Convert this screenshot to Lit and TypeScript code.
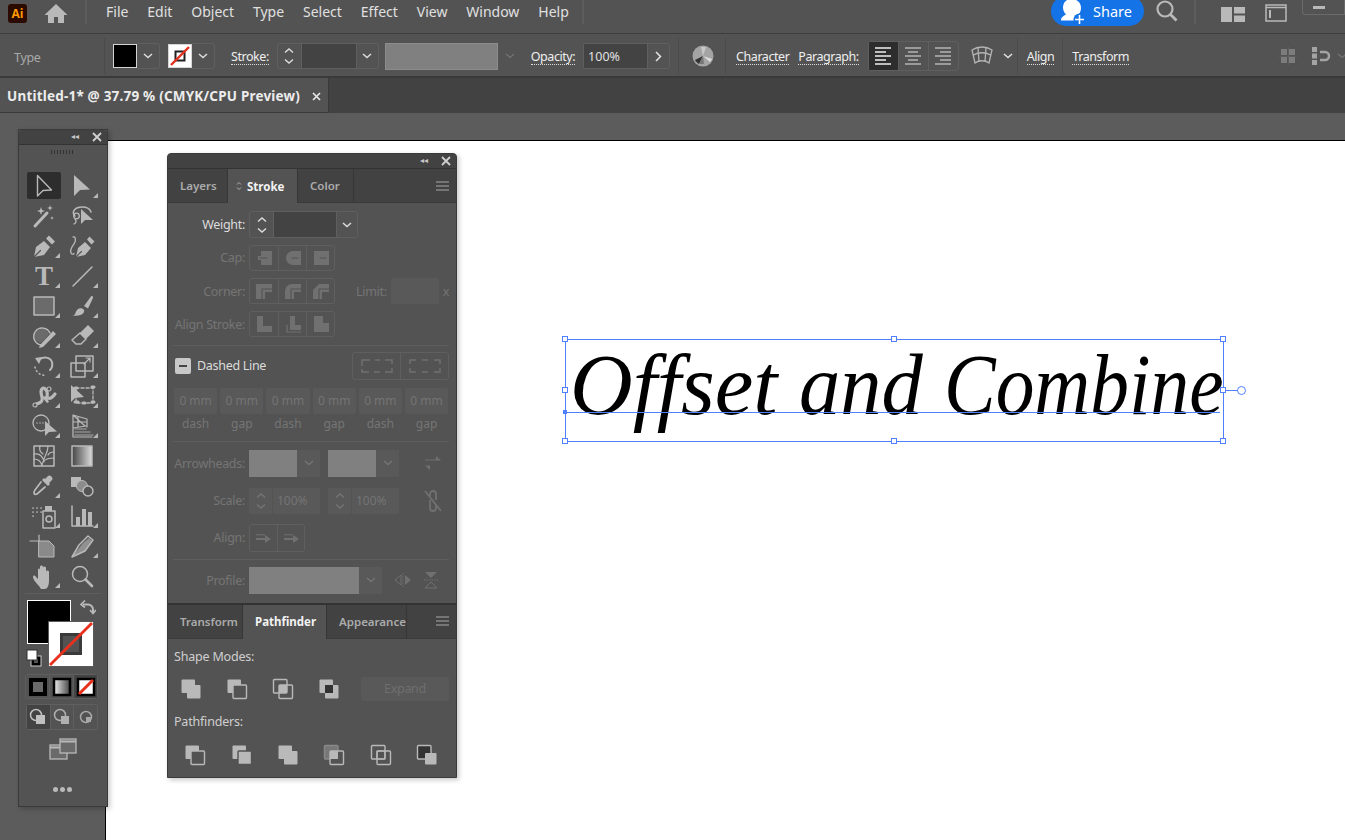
import { LitElement, html, css, svg } from 'lit';
import { customElement } from 'lit/decorators.js';

const G = '#b9b9b9';
const D = '#707070';
const BG = '#535353';

const ic = (body: unknown, size = 24, box = 24) =>
  html`<svg width=${size} height=${size} viewBox="0 0 ${box} ${box}" fill="none" stroke-linejoin="round" stroke-linecap="round">${body}</svg>`;

const chevron = (color = '#dcdcdc') =>
  html`<svg width="10" height="6" viewBox="0 0 10 6"><path d="M1 1l4 3.6L9 1" fill="none" stroke=${color} stroke-width="1.5"/></svg>`;

const spinner = (color = '#dcdcdc') =>
  html`<svg width="12" height="20" viewBox="0 0 12 20" fill="none" stroke=${color} stroke-width="1.4"><path d="M2 6.5l4-3.6 4 3.6M2 13.5l4 3.6 4-3.6"/></svg>`;

const tools: [unknown, boolean][] = [
  [svg`<path d="M5.5 1.5V22l5.5-5.5 8.5-.5z" stroke=${G} stroke-width="1.4"/>`, false],
  [svg`<path d="M4 1V22l6-6 10-.5z" fill=${G}/>`, true],
  [svg`<path d="M3 22L15 9" stroke=${G} stroke-width="3"/><path d="M9 3l1 3 3 1-3 1-1 3-1-3-3-1 3-1zM18 1l.7 2.3L21 4l-2.3.7L18 7l-.7-2.3L15 4l2.3-.7zM20 12l.5 1.500 1.500.5-1.500.5-.5 1.500-.5-1.500-1.500-.5 1.500-.5z" fill=${G}/>`, false],
  [svg`<path d="M5 12C1 8 5 3 12 3c5 0 8 2 9 5" stroke=${G} stroke-width="1.5"/><circle cx="6.500" cy="12" r="2.800" stroke=${G} stroke-width="1.300"/><path d="M5 15c2 2 1 4-1 5" stroke=${G} stroke-width="1.300"/><path d="M11 5v15l4-4 8 0z" fill=${G}/>`, false],
  [svg`<path d="M2 23l2-10 8-6 6 6-6 8zM14 4.500l3-3 6 6-3 3z" fill=${G}/><path d="M2.500 22.500l6-6" stroke=${BG} stroke-width="1.200"/>`, true],
  [svg`<path d="M6 23l2-9 7-6 6 6-6 7zM17 5.500l2.500-3 5 5-3 3z" fill=${G}/><path d="M6.500 22.500l5-5" stroke=${BG} stroke-width="1.100"/><path d="M3 3c2-1 3 2 2 5S-1 15 1 19c.6 1.500 2 1.500 3 .5" stroke=${G} stroke-width="1.300"/>`, false],
  [svg`<text x="12" y="21" text-anchor="middle" font-family="Liberation Serif" font-weight="700" font-size="27" fill=${G}>T</text>`, true],
  [svg`<path d="M3 22L22 3" stroke=${G} stroke-width="1.500"/>`, true],
  [svg`<rect x="2" y="3" width="20" height="18" fill="#6b6b6b" stroke=${G} stroke-width="1.500"/>`, true],
  [svg`<path d="M14 12L21 2.500c1-1 2.500 0 2 1.500l-5 10.500z" fill=${G}/><path d="M2 22c4 0 3-5 6-7 2-1.500 5-1 6 1 1 3-2 6-12 6z" fill=${G}/>`, true],
  [svg`<path d="M9 21a8.500 8.500 0 1 1 9-12" stroke=${G} stroke-width="1.500"/><path d="M3 12a6.500 6.500 0 0 0 6 7l8-9-3-4a7 7 0 0 0-11 6z" fill="#6b6b6b"/><path d="M8 21L21 7l3 3-13 13-4 1z" fill=${G}/>`, true],
  [svg`<path d="M10 9L18 1l6 6-8 8z" fill=${G}/><path d="M10 9l6 6-5 5H6l-4-4z" stroke=${G} stroke-width="1.500"/>`, true],
  [svg`<path d="M7 6c4-4 11-3 13 2 1 4 0 6-2 8" stroke=${G} stroke-width="2"/><path d="M3 4l7-1-3 7z" fill=${G}/><path d="M3 13c1 5 5 9 11 8" stroke=${G} stroke-width="1.500" stroke-dasharray="1 3"/>`, true],
  [svg`<rect x="1" y="9" width="14" height="14" stroke=${G} stroke-width="1.500"/><rect x="6" y="2" width="17" height="15" stroke=${G} stroke-width="1.500"/><path d="M14 10l6-6m-4 0h4v4" stroke=${G} stroke-width="1.200"/>`, true],
  [svg`<path d="M4 20c5-1 7-3 6-7S8 7 10 5c2-2 4 0 5 3s-1 5 1 6c2 1 4 0 7-4" stroke=${G} stroke-width="3.200"/><path d="M10 13l5 6 2-1-3-6" fill=${G}/><circle cx="3" cy="21" r="2" fill=${BG} stroke=${G} stroke-width="1.200"/><circle cx="17" cy="5" r="2" fill=${BG} stroke=${G} stroke-width="1.200"/>`, true],
  [svg`<rect x="6" y="4" width="17" height="15" stroke=${G} stroke-width="1.300" stroke-dasharray="3 2"/><path d="M1 1v17l4-4 9-1z" fill=${G}/><path d="M5 4h2M5 18h3M22 3h2M22 18h2M13 19h2" stroke=${G} stroke-width="3"/>`, true],
  [svg`<circle cx="9" cy="9" r="8" stroke=${G} stroke-width="1.300"/><path d="M5 9h.1M8 9h.1M11 9h.1" stroke=${G} stroke-width="1.400"/><path d="M13 7v15l4-4 8-.5z" fill=${G}/>`, true],
  [svg`<path d="M3 1v22M3 1l14 4v8M3 23h19M3 1l12 11M3 8h14M3 14l13-2M8 3v10" stroke=${G} stroke-width="1.200"/><path d="M5 15h11M5 18h15M5 21h18" stroke="#8c8c8c" stroke-width="1.500"/>`, true],
  [svg`<rect x="2" y="2" width="20" height="20" stroke=${G} stroke-width="1.500"/><path d="M2 15c4 0 7 2 8 7M10 22c0-6 4-8 12-8M12 18c-1-5-4-9-10-8M12 15c1-4 4-6 4-13M8 2c-1 3 0 6 3 8M22 8c-3 0-5 1-6 3" stroke=${G} stroke-width="1.200"/>`, false],
  [svg`<defs><linearGradient id="grd"><stop offset="0" stop-color="#444"/><stop offset="1" stop-color="#ddd"/></linearGradient></defs><rect x="2" y="2" width="20" height="20" fill="url(#grd)" stroke=${G} stroke-width="1.500"/>`, false],
  [svg`<path d="M16 2c2-2 6 2 4 4l-3 3 1 1-2 2-6-6 2-2 1 1z" fill=${G}/><path d="M9 8L3 16c-2 3-1 5 2 4l8-7" stroke=${G} stroke-width="1.700"/>`, true],
  [svg`<rect x="1" y="3" width="10" height="10" fill=${G}/><circle cx="12" cy="12" r="5.500" fill="#8c8c8c" stroke=${G}/><circle cx="18" cy="17" r="5" fill=${BG} stroke=${G} stroke-width="1.500"/>`, false],
  [svg`<path d="M1 4h.1M5 4h.1M9 4h.1M1 8h.1M5 8h.1M9 8h.1M1 12h.1" stroke=${G} stroke-width="1.700"/><rect x="11" y="7" width="12" height="17" stroke=${G} stroke-width="1.500"/><rect x="13" y="2" width="7" height="5" fill=${G}/><circle cx="17" cy="15" r="3" stroke=${G} stroke-width="1.500"/>`, true],
  [svg`<path d="M2 2v20h21" stroke=${G} stroke-width="1.500"/><rect x="6" y="13" width="4" height="9" fill=${G}/><rect x="12" y="5" width="4" height="17" fill=${G}/><rect x="18" y="8" width="4" height="14" fill=${G}/>`, true],
  [svg`<path d="M-2 7h10M7 1v10" stroke=${G} stroke-width="1.200"/><path d="M7 7h10l5 5v11H7z" fill="#8a8a8a" stroke=${G}/>`, false],
  [svg`<path d="M2 23l7-12 9-9 5 4-8 11z" stroke=${G} stroke-width="1.500"/><path d="M2 23l11-14 6-5 3 3-7 10z" fill=${G} opacity=".6"/>`, true],
  [svg`<path d="M7 22c-3-3-6-7-6-9 0-2 2-2 3 0l2 2V6c0-2 2-2 2 0v5-8c0-2 3-2 3 0v8-7c0-2 3-2 3 0v8-4c0-2 3-2 3 0v9c0 5-2 8-4 8H9z" fill=${G}/>`, true],
  [svg`<circle cx="10" cy="10" r="7.500" stroke=${G} stroke-width="1.500"/><path d="M15.500 15.500L22 22" stroke=${G} stroke-width="2.600"/>`, false],
];

const square = (x: number, y: number, w: number, fill: string, stroke = 'none') =>
  svg`<rect x=${x} y=${y} width=${w} height=${w} rx="1" fill=${fill} stroke=${stroke} stroke-width="1.400"/>`;

const shapeModes = [
  svg`${square(1.5, 1.5, 13.5, G)}${square(7, 7, 13.5, G)}`,
  svg`${square(1.5, 1.5, 13.5, G)}${square(7, 7, 13.5, BG, G)}`,
  svg`${square(1.5, 1.5, 13.5, BG, G)}${square(7, 7, 13.5, 'none', G)}<rect x="7" y="7" width="8" height="8" fill=${G}/>`,
  svg`${square(1.5, 1.5, 13.5, G)}${square(7, 7, 13.5, G)}<rect x="7" y="7" width="8" height="8" fill="#333"/>`,
];

const pathfinders = [
  svg`${square(1.5, 1.5, 13.5, G)}${square(7, 7, 13.5, BG, G)}`,
  svg`${square(1.5, 1.5, 13.5, G)}${square(7, 7, 13.5, G, BG)}`,
  svg`${square(1.5, 1.5, 13.5, G)}${square(7, 7, 13.5, G)}`,
  svg`${square(1.5, 1.5, 13.5, '#777', '#888')}${square(7, 7, 13.5, BG, G)}<rect x="7" y="7" width="8" height="8" fill=${G}/>`,
  svg`${square(1.5, 1.5, 13.5, BG, G)}${square(7, 7, 13.5, 'none', G)}<rect x="7" y="7" width="8" height="8" stroke=${G} stroke-width="1.200"/>`,
  svg`${square(1.5, 1.5, 13.5, '#333', G)}${square(9, 9, 11.5, G)}`,
];

// cap, corner and align stroke buttons, all disabled
const capIcons = [
  svg`<path d="M6 2h11v14H6v-5H3V7h3z" fill=${D}/><path d="M5 9h7" stroke=${BG} stroke-width="1.200"/>`,
  svg`<path d="M9 2h8v14H9a7 7 0 0 1 0-14z" fill=${D}/><path d="M8 9h6" stroke=${BG} stroke-width="1.200"/>`,
  svg`<path d="M2 2h15v14H2z" fill=${D}/><path d="M8 9h6" stroke=${BG} stroke-width="1.200"/>`,
];
const cornerIcons = [
  svg`<path d="M1 2h16v8h-7v7H1z" fill=${D}/><path d="M7 17V7h10" stroke=${BG} stroke-width="1.100"/>`,
  svg`<path d="M1 17V9a7 7 0 0 1 7-7h9v8h-7v7z" fill=${D}/><path d="M7 17V7h10" stroke=${BG} stroke-width="1.100"/>`,
  svg`<path d="M1 17V8l6-6h10v8h-7v7z" fill=${D}/><path d="M7 17V7h10" stroke=${BG} stroke-width="1.100"/>`,
];
const alignIcons = [
  svg`<path d="M2 1h6v10h9v6H2z" fill=${D}/>`,
  svg`<path d="M6 1h5v9h6v5H6z" fill=${D}/><path d="M3 10v7h14" fill="none" stroke=${D} stroke-width="1.200"/>`,
  svg`<path d="M2 1h9v7h6v9H2z" fill=${D}/>`,
];

@customElement('app-root')
export class AppRoot extends LitElement {
  static styles = css`
    :host {
      display: block;
      width: 1345px;
      height: 840px;
      overflow: hidden;
      font-family: 'Noto Sans', 'Open Sans', sans-serif;
      color: #dcdcdc;
      background: #5c5c5c;
    }
    .app { display: flex; flex-direction: column; height: 840px; }
    svg { display: block; flex: none; }

    /* menu bar */
    .menubar {
      height: 34px; flex: none; display: flex; align-items: flex-start;
      background: #535353;
      border-bottom: 1px solid #3d3d3d; box-sizing: border-box;
      position: relative;
    }
    .logo {
      margin: 4px 0 0 8px; width: 19px; height: 19px; border-radius: 3px; background: #2b0a00;
      color: #ff9a00; font: 700 12px/19px 'Open Sans', sans-serif; text-align: center;
    }
    .home { margin: 1px 0 0 17px; }
    .vsep { width: 2px; height: 24px; background: #5d5d5d; flex: none; }
    .menu { display: flex; gap: 18.900px; margin-left: 19px; font-size: 14px; line-height: 24px; color: #e0e0e0; }
    .menubar .spacer { flex: 1; }
    .share {
      margin-top: -4px; width: 93px; height: 30px; border-radius: 15px; background: #1473e6; color: #fff;
      display: flex; align-items: center; gap: 7px; padding-left: 9px; box-sizing: border-box; font-size: 14.500px;
    }
    .winbox {
      width: 43px; height: 15px; margin-left: 15px; border: 1px solid #6a6a6a; border-top: 0;
      border-radius: 0 0 0 3px; display: flex; box-sizing: border-box; padding: 6px 0 0 10px;
    }
    .winbox i { width: 12px; height: 2.500px; background: #b9b9b9; }

    /* control bar */
    .control {
      height: 44px; flex: none; box-sizing: border-box; display: flex; align-items: center; padding-top: 2px;
      background: #535353; border-bottom: 2px solid #3a3a3a; font-size: 12.500px; letter-spacing: -0.3px;
    }
    .mode { width: 104px; padding-left: 14px; margin-top: 2px; color: #a9a9a9; flex: none; box-sizing: border-box; }
    .csep { width: 1px; height: 36px; background: #4b4b4b; flex: none; }
    .swatch { width: 24px; height: 24px; box-sizing: border-box; border: 1px solid #d4d4d4; background: #000; flex: none; }
    .swatch.none { background: #fff; display: flex; align-items: center; justify-content: center; }
    .seg {
      display: flex; align-items: stretch; flex: none; box-sizing: border-box;
      border: 1.500px solid #5f5f5f; border-radius: 3px; height: 26px;
    }
    .seg > * { display: flex; align-items: center; justify-content: center; box-sizing: border-box; }
    .seg > * + * { border-left: 1px solid #5f5f5f; }
    .drop { width: 23px; border-left: 0; border-radius: 0 3px 3px 0; }
    .dark { background: #434343; }
    .gray { background: #808080; }
    .link { color: #eee; border-bottom: 1px dotted #ddd; line-height: 15px; flex: none; white-space: nowrap; letter-spacing: -0.45px; margin-top: 2px; }
    .opacity-val { color: #e0e0e0; font-size: 12.500px; letter-spacing: 0; justify-content: flex-start !important; padding-left: 4px; }
    .active { background: #2d2d2d; }

    /* document tabs */
    .tabs { height: 35px; flex: none; background: #424242; display: flex; }
    .doc {
      width: 329px; box-sizing: border-box; background: #535353; border-right: 1px solid #3a3a3a;
      border-bottom: 1px solid #3a3a3a; display: flex; align-items: center; padding: 2px 0 0 7px;
      font-size: 13.500px; font-weight: 700; letter-spacing: 0.2px; color: #ececec; white-space: nowrap;
    }
    .doc svg { margin-left: 12px; }

    /* canvas */
    .canvas { flex: 1; position: relative; background: #5c5c5c; }
    .artboard {
      position: absolute; left: 105px; top: 27px; right: 0; bottom: 0;
      background: #fff; border-top: 1px solid #000; border-left: 1px solid #000;
    }
    .sel { position: absolute; left: 565px; top: 226px; width: 659px; height: 103px; border: 1px solid #4f80ff; box-sizing: border-box; }
    .art {
      position: absolute; left: 4px; top: -13px; display: flex; white-space: nowrap; color: #000;
      font: italic 400 86px/116px 'Liberation Serif', serif;
    }
    .art span { display: block; transform-origin: left center; }
    .w1 { width: 229px; transform: scaleX(1.01); }
    .w2 { width: 145px; transform: scaleX(0.96); }
    .w3 { width: 277px; transform: scaleX(0.9); }
    .baseline { position: absolute; left: 0; width: 654px; top: 72px; height: 1px; background: #4f80ff; }
    .h { position: absolute; width: 6px; height: 6px; box-sizing: border-box; border: 1px solid #4f80ff; background: #fff; }
    .h.solid { background: #4f80ff; width: 4px; height: 4px; }
    .shaft { position: absolute; left: 657px; top: 50px; width: 15px; height: 1px; background: #4f80ff; }
    .knob { position: absolute; left: 671px; top: 46px; width: 9px; height: 9px; border-radius: 50%; border: 1px solid #4f80ff; background: #fff; box-sizing: border-box; }

    /* floating panels */
    .panel {
      position: absolute; box-sizing: border-box; background: #535353; border: 1px solid #3a3a3a;
      box-shadow: 2px 2px 5px rgba(0,0,0,.22); display: flex; flex-direction: column;
    }
    .phead {
      height: 15px; flex: none; box-sizing: border-box; background: #424242; display: flex; align-items: center; justify-content: flex-end;
      gap: 13px; padding-right: 5px; border-bottom: 1px solid #333; border-radius: 4px 4px 0 0;
    }
    .collapse { color: #c8c8c8; font-size: 8px; line-height: 12px; font-family: 'DejaVu Sans', sans-serif; }

    .toolbox { left: 18px; top: 16px; width: 90px; height: 678px; }
    .grip { height: 4px; width: 24px; margin: 5px 0 0 32px; flex: none;
      background: repeating-linear-gradient(90deg, #333 0 1px, transparent 1px 3px); }
    .tgrid { display: grid; grid-template-columns: 38px 38px; grid-auto-rows: 30px; margin: 17px 0 0 6px; flex: none; }
    .tool { position: relative; display: flex; align-items: center; justify-content: center; }
    .tool.on::before { content: ''; position: absolute; left: 2px; top: 1px; width: 34px; height: 27px; background: #2d2d2d; border-radius: 2px; }
    .tool svg { position: relative; overflow: visible; }
    .tool.fly::after {
      content: ''; position: absolute; right: 3px; bottom: 3px; width: 0; height: 0;
      border-left: 5px solid transparent; border-bottom: 5px solid #b9b9b9;
    }
    .tsep { height: 1px; background: #5e5e5e; margin: 2px 6px 0; flex: none; }
    .colors { position: relative; height: 73px; flex: none; }
    .fillbox { position: absolute; left: 8px; top: 6px; width: 44px; height: 44px; background: #000; border: 1px solid #fff; box-sizing: border-box; }
    .strokebox { position: absolute; left: 29px; top: 27px; width: 46px; height: 46px; background: #fff; border: 1px solid #5a5a5a; box-sizing: border-box; }
    .swap { position: absolute; left: 61px; top: 5px; }
    .defaults { position: absolute; left: 7px; top: 55px; }
    .modes { margin: 7px 0 0 6px; width: 73px; height: 25px; }
    .modes > * { flex: 1; }
    .draw { margin: 5px 0 0 7px; width: 72px; height: 26px; }
    .draw > * { flex: 1; }
    .screen { margin: 8px 0 0 30px; flex: none; }
    .dots { margin: 27px 0 0 34px; display: flex; gap: 2px; flex: none; }
    .dots i { width: 5px; height: 5px; border-radius: 50%; background: #b9b9b9; }

    .stroke-panel { left: 167px; top: 40px; width: 290px; height: 625px; border-radius: 4px 4px 0 0; }
    .ptabs { display: flex; height: 34px; flex: none; background: #424242; font-size: 11.500px; font-weight: 600; color: #ababab; border-bottom: 1px solid #3a3a3a; box-sizing: border-box; }
    .ptab { display: flex; align-items: center; box-sizing: border-box; padding-left: 12px; border-right: 1px solid #363636; }
    .ptab.on { background: #535353; color: #f2f2f2; font-weight: 700; height: 34px; gap: 5px; }
    .pmenu { margin: auto 7px auto auto; }
    .pbody { display: flex; flex-direction: column; padding: 0 7px 0 5px; font-size: 12.500px; letter-spacing: -0.3px; color: #757575; flex: none; }
    .row { display: flex; align-items: center; height: 27px; flex: none; }
    .label { width: 72px; margin-right: 4px; text-align: right; flex: none; white-space: nowrap; }
    .bright { color: #dcdcdc; }
    .rows { display: flex; flex-direction: column; gap: 6.300px; margin-top: 8px; }
    .hr { height: 1px; background: #5e5e5e; flex: none; margin-top: 7px; }
    .iconbtn { width: 28px; }
    .boxed { background: #595959; border-radius: 2px; }
    .check { width: 16px; height: 16px; border-radius: 2px; background: #c8c8c8; margin: 0 6px 0 2px; display: flex; align-items: center; justify-content: center; flex: none; }
    .check i { width: 8px; height: 2px; background: #444; }
    .dashes { display: grid; grid-template-columns: repeat(6, 43.200px); column-gap: 3px; margin: 8px 0 0 1px; flex: none; }
    .dashes div { height: 26px; background: #595959; color: #747474; font-size: 12px; letter-spacing: 0; display: flex; align-items: center; justify-content: center; border-radius: 2px; }
    .dashes span { height: 16px; margin-top: 2px; text-align: center; font-size: 12px; letter-spacing: 0; line-height: 16px; }
    .mini { width: 23px; height: 100%; display: flex; align-items: center; justify-content: center; background: #595959; flex: none; }
    .pct { height: 100%; background: #595959; border-left: 1px solid #535353; display: flex; align-items: center; padding-left: 4px; box-sizing: border-box; font-size: 12px; letter-spacing: 0; color: #747474; }
    .pick { height: 100%; flex: none; }
    .ml8 { margin-left: 8px; }
    .path-head { margin-top: 10px; height: 16px; line-height: 16px; color: #cfcfcf; font-size: 12.500px; letter-spacing: -0.2px; padding-left: 1px; flex: none; }
    .irow { display: flex; height: 24px; margin: 12px 0 0 -5px; align-items: center; flex: none; }
    .irow > div { display: flex; justify-content: center; flex: none; }
    .expand { width: 88px; height: 24px; background: #595959; color: #6f6f6f; font-size: 12.500px; align-items: center; border-radius: 2px; }
  `;

  private header() {
    return html`<div class="phead">
      <span class="collapse">◂◂</span>
      <svg width="10" height="10" viewBox="0 0 10 10"><path d="M1 1l8 8M9 1l-8 8" stroke="#d0d0d0" stroke-width="1.800"/></svg>
    </div>`;
  }

  private hamburger() {
    return html`<svg class="pmenu" width="13" height="10" viewBox="0 0 13 10"><path d="M0 1h13M0 5h13M0 9h13" stroke="#a8a8a8" stroke-width="1.200"/></svg>`;
  }

  private iconSeg(icons: unknown[]) {
    return html`<div class="seg">${icons.map((i) => html`<div class="iconbtn">${ic(i, 18, 18)}</div>`)}</div>`;
  }

  private menubar() {
    return html`<div class="menubar">
      <div class="logo">Ai</div>
      <div class="home">
        <svg width="24" height="24" viewBox="0 0 24 24"><path d="M12 3L0.500 14h3.500v8h6v-6h4v6h6v-8h3.500z" fill="#b9b9b9"/></svg>
      </div>
      <div class="vsep" style="margin-left:17px"></div>
      <div class="menu">
        ${['File', 'Edit', 'Object', 'Type', 'Select', 'Effect', 'View', 'Window', 'Help'].map((m) => html`<span>${m}</span>`)}
      </div>
      <div class="vsep" style="margin-left:13px"></div>
      <div class="spacer"></div>
      <div class="share">
        <svg width="26" height="28" viewBox="0 0 26 28"><path d="M11.500 2C6 2 3 6 3 10.500c0 3 1.500 5.500 3 7C3.500 19 1 20 1 23.500h13.500A7 7 0 0 1 19 17c1.500-2 2-4 2-6.500C21 6 17 2 11.500 2z" fill="#fff"/><circle cx="19.500" cy="22.500" r="6" fill="#1473e6"/><path d="M19.500 18v9M15 22.500h9" stroke="#fff" stroke-width="1.600"/></svg>
        <span>Share</span>
      </div>
      <svg style="margin:-1px 0 0 11px" width="24" height="24" viewBox="0 0 24 24" fill="none" stroke="#b9b9b9"><circle cx="10" cy="10" r="7.500" stroke-width="2.200"/><path d="M15.500 15.500l6 6" stroke-width="2.800"/></svg>
      <div class="vsep" style="margin-left:15px"></div>
      <svg style="margin:6px 0 0 25px" width="24" height="16" viewBox="0 0 24 16" fill="#b9b9b9"><rect x="0" y="1" width="11" height="15"/><rect x="13" y="1" width="11" height="6.500"/><rect x="13" y="9.500" width="11" height="6.500"/></svg>
      <svg style="margin:4px 0 0 20px" width="22" height="18" viewBox="0 0 22 18" fill="none" stroke="#b9b9b9"><rect x="1" y="1" width="20" height="16" stroke-width="1.500"/><path d="M1 3.500h20" stroke-width="1.500"/><path d="M4 6h2v8H4z" fill="#b9b9b9" stroke="none"/></svg>
      <div class="winbox"><i></i></div>
    </div>`;
  }

  private controlbar() {
    return html`<div class="control">
      <div class="mode">Type</div>
      <div class="csep"></div>
      <div class="swatch" style="margin-left:8px"></div>
      <div class="seg drop">${html`<div style="width:22px">${chevron()}</div>`}</div>
      <div class="swatch none" style="margin-left:8px">
        <svg width="22" height="22" viewBox="0 0 22 22"><rect x="6.500" y="6.500" width="9" height="9" fill="none" stroke="#222" stroke-width="2"/><path d="M2 20L20 2" stroke="#e8301c" stroke-width="2.400"/></svg>
      </div>
      <div class="seg drop">${html`<div style="width:22px">${chevron()}</div>`}</div>
      <span class="link" style="margin-left:16px">Stroke:</span>
      <div class="seg" style="margin-left:8px;width:102px">
        <div style="width:23px">${spinner()}</div>
        <div class="dark" style="width:55px"></div>
        <div style="width:21px">${chevron()}</div>
      </div>
      <div class="gray" style="margin-left:6px;width:113px;height:27px;flex:none;border:1px solid #8c8c8c;box-sizing:border-box"></div>
      <div style="width:24px;display:flex;justify-content:center;flex:none">${chevron('#707070')}</div>
      <span class="link" style="margin-left:9px">Opacity:</span>
      <div class="seg" style="margin-left:8px;width:87px">
        <div class="dark opacity-val" style="width:63px">100%</div>
        <div style="width:21px"><svg width="7" height="11" viewBox="0 0 7 11"><path d="M1 1l4.500 4.500L1 10" fill="none" stroke="#e4e4e4" stroke-width="1.500"/></svg></div>
      </div>
      <div class="csep" style="margin-left:8px"></div>
      <svg style="margin-left:13px" width="22" height="22" viewBox="0 0 22 22">
        <circle cx="11" cy="11" r="10.500" fill="#a4a4a4"/>
        <path d="M11 11L3 15a9 9 0 0 0 4 4z" fill="#333"/><path d="M11 11l-4 8h5z" fill="#777"/><path d="M11 11l7 6 2-3z" fill="#ddd"/><path d="M11 11L9 2l5 0z" fill="#c8c8c8"/>
      </svg>
      <div class="csep" style="margin-left:11px"></div>
      <span class="link" style="margin-left:10px">Character</span>
      <span class="link" style="margin-left:9px">Paragraph:</span>
      <div class="seg" style="margin-left:9px;width:91px;height:30px">
        ${['M4 5h16M4 9h11M4 13h16M4 17h11M4 21h16', 'M4 5h16M7 9h10M4 13h16M7 17h10M4 21h16', 'M4 5h16M9 9h11M4 13h16M9 17h11M4 21h16'].map(
          (d, i) => html`<div class=${i === 0 ? 'active' : ''} style="flex:1">
            <svg width="24" height="26" viewBox="0 0 24 26"><path d=${d} stroke=${i === 0 ? '#f0f0f0' : '#b4b4b4'} stroke-width="1.500"/></svg>
          </div>`,
        )}
      </div>
      <svg style="margin-left:12px" width="22" height="22" viewBox="0 0 22 22" fill="none" stroke="#b4b4b4" stroke-width="1.300"><path d="M1 5c6-4 14-4 20 0l-3 13c-4-3-10-3-14 0zM7 3l1 13M15 3l-1 13M2.500 10c5-3 12-3 17 0"/></svg>
      <div style="margin-left:10px;width:12px">${chevron('#e0e0e0')}</div>
      <div class="csep" style="margin-left:4px"></div>
      <span class="link" style="margin-left:9px">Align</span>
      <div class="csep" style="margin-left:8px"></div>
      <span class="link" style="margin-left:9px">Transform</span>
      <svg style="margin-left:150px" width="18" height="18" viewBox="0 0 18 18" fill="#7c7c7c"><rect x="2" y="2" width="6" height="6"/><rect x="10" y="2" width="6" height="6"/><rect x="2" y="10" width="6" height="6"/><rect x="10" y="10" width="6" height="6"/><path d="M9 0h.6v18H9zM0 9h18v.6H0z" fill="#666"/></svg>
      <svg style="margin-left:14px" width="20" height="20" viewBox="0 0 20 20"><path d="M1 1h5v5H1zM1 7.500h5v5H1zM1 14h5v5H1z" fill="#a4a4a4"/><path d="M9 6h5a4 4 0 0 1 0 8H9" fill="none" stroke="#a4a4a4" stroke-width="2.500"/></svg>
      <div style="margin-left:6px">${chevron('#707070')}</div>
    </div>`;
  }

  private toolbox() {
    return html`<div class="panel toolbox">
      ${this.header()}
      <div class="grip"></div>
      <div class="tgrid">
        ${tools.map(([b, fly], i) => html`<div class="tool ${fly ? 'fly' : ''} ${i === 0 ? 'on' : ''}">${ic(b)}</div>`)}
      </div>
      <div class="tsep"></div>
      <div class="colors">
        <div class="fillbox"></div>
        <div class="strokebox">
          <svg width="44" height="44" viewBox="0 0 44 44"><rect x="12.500" y="12.500" width="19" height="19" fill="#535353" stroke="#3a3a3a" stroke-width="3"/><path d="M1 43L43 1" stroke="#e8301c" stroke-width="2.800"/></svg>
        </div>
        <svg class="swap" width="16" height="16" viewBox="0 0 16 16" fill="none" stroke="#b9b9b9" stroke-width="2"><path d="M3 5.500h5a5 5 0 0 1 5 5V13"/><path d="M5 1.500L1 5.500l4 3M10 11l3 3.500 3-3.500" stroke-width="1.600"/></svg>
        <svg class="defaults" width="16" height="18" viewBox="0 0 16 18"><rect x="5" y="7" width="10" height="10" fill="#000" stroke="#ccc"/><rect x="8" y="10" width="4" height="4" fill="#535353"/><rect x="1" y="1" width="10" height="10" fill="#fff" stroke="#333"/></svg>
      </div>
      <div class="seg modes">
        <div><svg width="20" height="20" viewBox="0 0 20 20"><rect x="1" y="1" width="18" height="18" fill="#000"/><rect x="5" y="5" width="10" height="10" fill="#6a6a6a"/></svg></div>
        <div><svg width="20" height="20" viewBox="0 0 20 20"><defs><linearGradient id="gm"><stop offset="0" stop-color="#eee"/><stop offset="1" stop-color="#444"/></linearGradient></defs><rect x="2" y="2" width="16" height="16" fill="url(#gm)" stroke="#000" stroke-width="2.500"/></svg></div>
        <div class="dark"><svg width="20" height="20" viewBox="0 0 20 20"><rect x="2" y="2" width="16" height="16" fill="#fff" stroke="#000" stroke-width="2.500"/><path d="M3 17L17 3" stroke="#e8301c" stroke-width="3"/></svg></div>
      </div>
      <div class="seg draw">
        <div class="dark"><svg width="20" height="20" viewBox="0 0 20 20"><circle cx="8" cy="8" r="5.500" fill="none" stroke="#c0c0c0" stroke-width="1.500"/><rect x="8" y="8" width="9" height="9" fill="#c0c0c0"/></svg></div>
        <div><svg width="20" height="20" viewBox="0 0 20 20"><circle cx="8" cy="8" r="5.500" fill="none" stroke="#b0b0b0" stroke-width="1.500"/><rect x="9" y="9" width="8" height="8" fill="#b0b0b0"/></svg></div>
        <div><svg width="20" height="20" viewBox="0 0 20 20"><circle cx="10" cy="10" r="5.500" fill="none" stroke="#a8a8a8" stroke-width="1.500"/><rect x="10" y="10" width="5" height="5" fill="#a8a8a8"/></svg></div>
      </div>
      <svg class="screen" width="28" height="22" viewBox="0 0 28 22"><rect x="1" y="7" width="17" height="14" fill="#6a6a6a" stroke="#b9b9b9" stroke-width="1.300"/><rect x="11" y="1" width="16" height="14" fill="#6a6a6a" stroke="#b9b9b9" stroke-width="1.300"/><path d="M11 3.500h16M1 9.500h10" stroke="#b9b9b9" stroke-width="2"/></svg>
      <div class="dots"><i></i><i></i><i></i></div>
    </div>`;
  }

  private dashes() {
    const names = ['dash', 'gap', 'dash', 'gap', 'dash', 'gap'];
    return html`<div class="dashes">
      ${names.map(() => html`<div>0 mm</div>`)}
      ${names.map((n) => html`<span>${n}</span>`)}
    </div>`;
  }

  private pick(w: number, extra = '') {
    return html`<div class="gray pick ${extra}" style="width:${w}px"></div>
      <div class="mini" style="height:100%">${chevron('#747474')}</div>`;
  }

  private scale(extra = '') {
    return html`<div class="mini ${extra}">${spinner('#747474')}</div><div class="pct" style="width:48px">100%</div>`;
  }

  private strokePanel() {
    return html`<div class="panel stroke-panel">
      ${this.header()}
      <div class="ptabs">
        <div class="ptab" style="width:60px">Layers</div>
        <div class="ptab on" style="width:70px;padding-left:8px">
          <svg width="6" height="10" viewBox="0 0 6 10" fill="none" stroke="#b0b0b0"><path d="M1 3.500l2-2 2 2M1 6.500l2 2 2-2"/></svg>Stroke
        </div>
        <div class="ptab" style="width:56px">Color</div>
        ${this.hamburger()}
      </div>
      <div class="pbody">
        <div class="rows">
          <div class="row">
            <span class="label bright">Weight:</span>
            <div class="seg" style="width:109px;height:27px">
              <div style="width:23px">${spinner()}</div>
              <div class="dark" style="width:63px"></div>
              <div style="width:20px">${chevron()}</div>
            </div>
          </div>
          <div class="row"><span class="label">Cap:</span>${this.iconSeg(capIcons)}</div>
          <div class="row">
            <span class="label">Corner:</span>${this.iconSeg(cornerIcons)}
            <span style="margin-left:21px">Limit:</span>
            <div class="boxed" style="width:48px;height:26px;margin-left:4px"></div>
            <span style="margin-left:4px">x</span>
          </div>
          <div class="row"><span class="label">Align Stroke:</span>${this.iconSeg(alignIcons)}</div>
        </div>
        <div class="hr"></div>
        <div class="row" style="height:28px;margin-top:6px">
          <div class="check"><i></i></div>
          <span class="bright" style="white-space:nowrap">Dashed Line</span>
          <div class="seg" style="margin-left:auto;width:97px;height:28px">
            <div style="flex:1"><svg width="32" height="18" viewBox="0 0 32 18" fill="none" stroke=${D} stroke-width="1.500"><path d="M1 9V3h8M14 3h5M24 3h7v4M1 12v3h7M13 15h6M24 15h7v-4"/></svg></div>
            <div style="flex:1"><svg width="32" height="18" viewBox="0 0 32 18" fill="none" stroke=${D} stroke-width="1.500"><path d="M1 7V3h6M13 3h6M25 3h6v4M1 11v4h6M13 15h6M25 15h6v-4"/></svg></div>
          </div>
        </div>
        ${this.dashes()}
        <div class="hr" style="margin-top:9px"></div>
        <div class="row" style="margin-top:8px">
          <span class="label">Arrowheads:</span>
          ${this.pick(48)}
          <div class="gray pick ml8" style="width:48px"></div>
          <div class="mini">${chevron('#747474')}</div>
          <svg style="margin-left:25px" width="18" height="16" viewBox="0 0 18 16" fill=${D}><path d="M1 4.500h11V1l5 4.500H1zM17 10.500H6V15L1 10.500z"/></svg>
        </div>
        <div class="row" style="height:26px;margin-top:11px">
          <span class="label">Scale:</span>
          ${this.scale()}
          <div class="mini ml8">${spinner('#747474')}</div><div class="pct" style="width:48px">100%</div>
          <svg style="margin-left:24px" width="20" height="24" viewBox="0 0 20 24" fill="none" stroke=${D} stroke-width="1.800"><path d="M7 7V5a3 3 0 0 1 6 0v6M7 11v8a3 3 0 0 0 6 0v-3M2 2l16 20"/></svg>
        </div>
        <div class="row" style="height:28px;margin-top:10px">
          <span class="label">Align:</span>
          <div class="seg" style="width:56px;height:28px">
            ${[0, 1].map(() => html`<div style="flex:1"><svg width="18" height="16" viewBox="0 0 18 16" fill=${D}><path d="M2 4.200h9v1H2zM2 8h9V5l6 4-6 4v-3H2z"/></svg></div>`)}
          </div>
        </div>
        <div class="hr" style="margin-top:7px"></div>
        <div class="row" style="margin-top:7px">
          <span class="label">Profile:</span>
          ${this.pick(110)}
          <svg style="margin-left:12px" width="18" height="14" viewBox="0 0 18 14"><path d="M9 0v14" stroke=${D} stroke-dasharray="1.500 1"/><path d="M7 2v10L1 7z" fill="none" stroke=${D}/><path d="M11 2v10l6-5z" fill=${D}/></svg>
          <svg style="margin-left:12px" width="14" height="18" viewBox="0 0 14 18"><path d="M0 9h14" stroke=${D} stroke-dasharray="1.500 1"/><path d="M1 1h12L7 7z" fill=${D}/><path d="M1 17h12l-6-6z" fill="none" stroke=${D}/></svg>
        </div>
      </div>
      <div style="height:2px;background:#333;margin-top:9px;flex:none"></div>
      <div class="ptabs">
        <div class="ptab" style="width:75px">Transform</div>
        <div class="ptab on" style="width:84px">Pathfinder</div>
        <div class="ptab" style="width:80px">Appearance</div>
        ${this.hamburger()}
      </div>
      <div class="pbody">
        <div class="path-head">Shape Modes:</div>
        <div class="irow">
          ${shapeModes.map((s) => html`<div style="width:46px">${ic(s, 22, 22)}</div>`)}
          <div class="expand" style="margin-left:9px">Expand</div>
        </div>
        <div class="path-head" style="margin-top:13px">Pathfinders:</div>
        <div class="irow" style="margin-top:13px;padding-left:4px">
          ${pathfinders.map((s) => html`<div style="width:46.400px">${ic(s, 22, 22)}</div>`)}
        </div>
      </div>
    </div>`;
  }

  private selection() {
    const handles = [
      [-4, -4], [325, -4], [654, -4], [-4, 47], [654, 47], [-4, 98], [325, 98], [654, 98],
    ];
    return html`<div class="sel">
      <div class="art"><span class="w1">Offset</span><span class="w2">and</span><span class="w3">Combine</span></div>
      <div class="baseline"></div>
      <div class="shaft"></div>
      <div class="knob"></div>
      ${handles.map(([x, y]) => html`<div class="h" style="left:${x}px;top:${y}px"></div>`)}
      <div class="h solid" style="left:-3px;top:70px"></div>
    </div>`;
  }

  render() {
    return html`<div class="app">
      ${this.menubar()}
      ${this.controlbar()}
      <div class="tabs">
        <div class="doc">
          <span>Untitled-1* @ 37.79 % (CMYK/CPU Preview)</span>
          <svg width="9" height="9" viewBox="0 0 9 9"><path d="M1 1l7 7M8 1L1 8" stroke="#e8e8e8" stroke-width="1.700"/></svg>
        </div>
      </div>
      <div class="canvas">
        <div class="artboard"></div>
        ${this.selection()}
        ${this.toolbox()}
        ${this.strokePanel()}
      </div>
    </div>`;
  }
}
